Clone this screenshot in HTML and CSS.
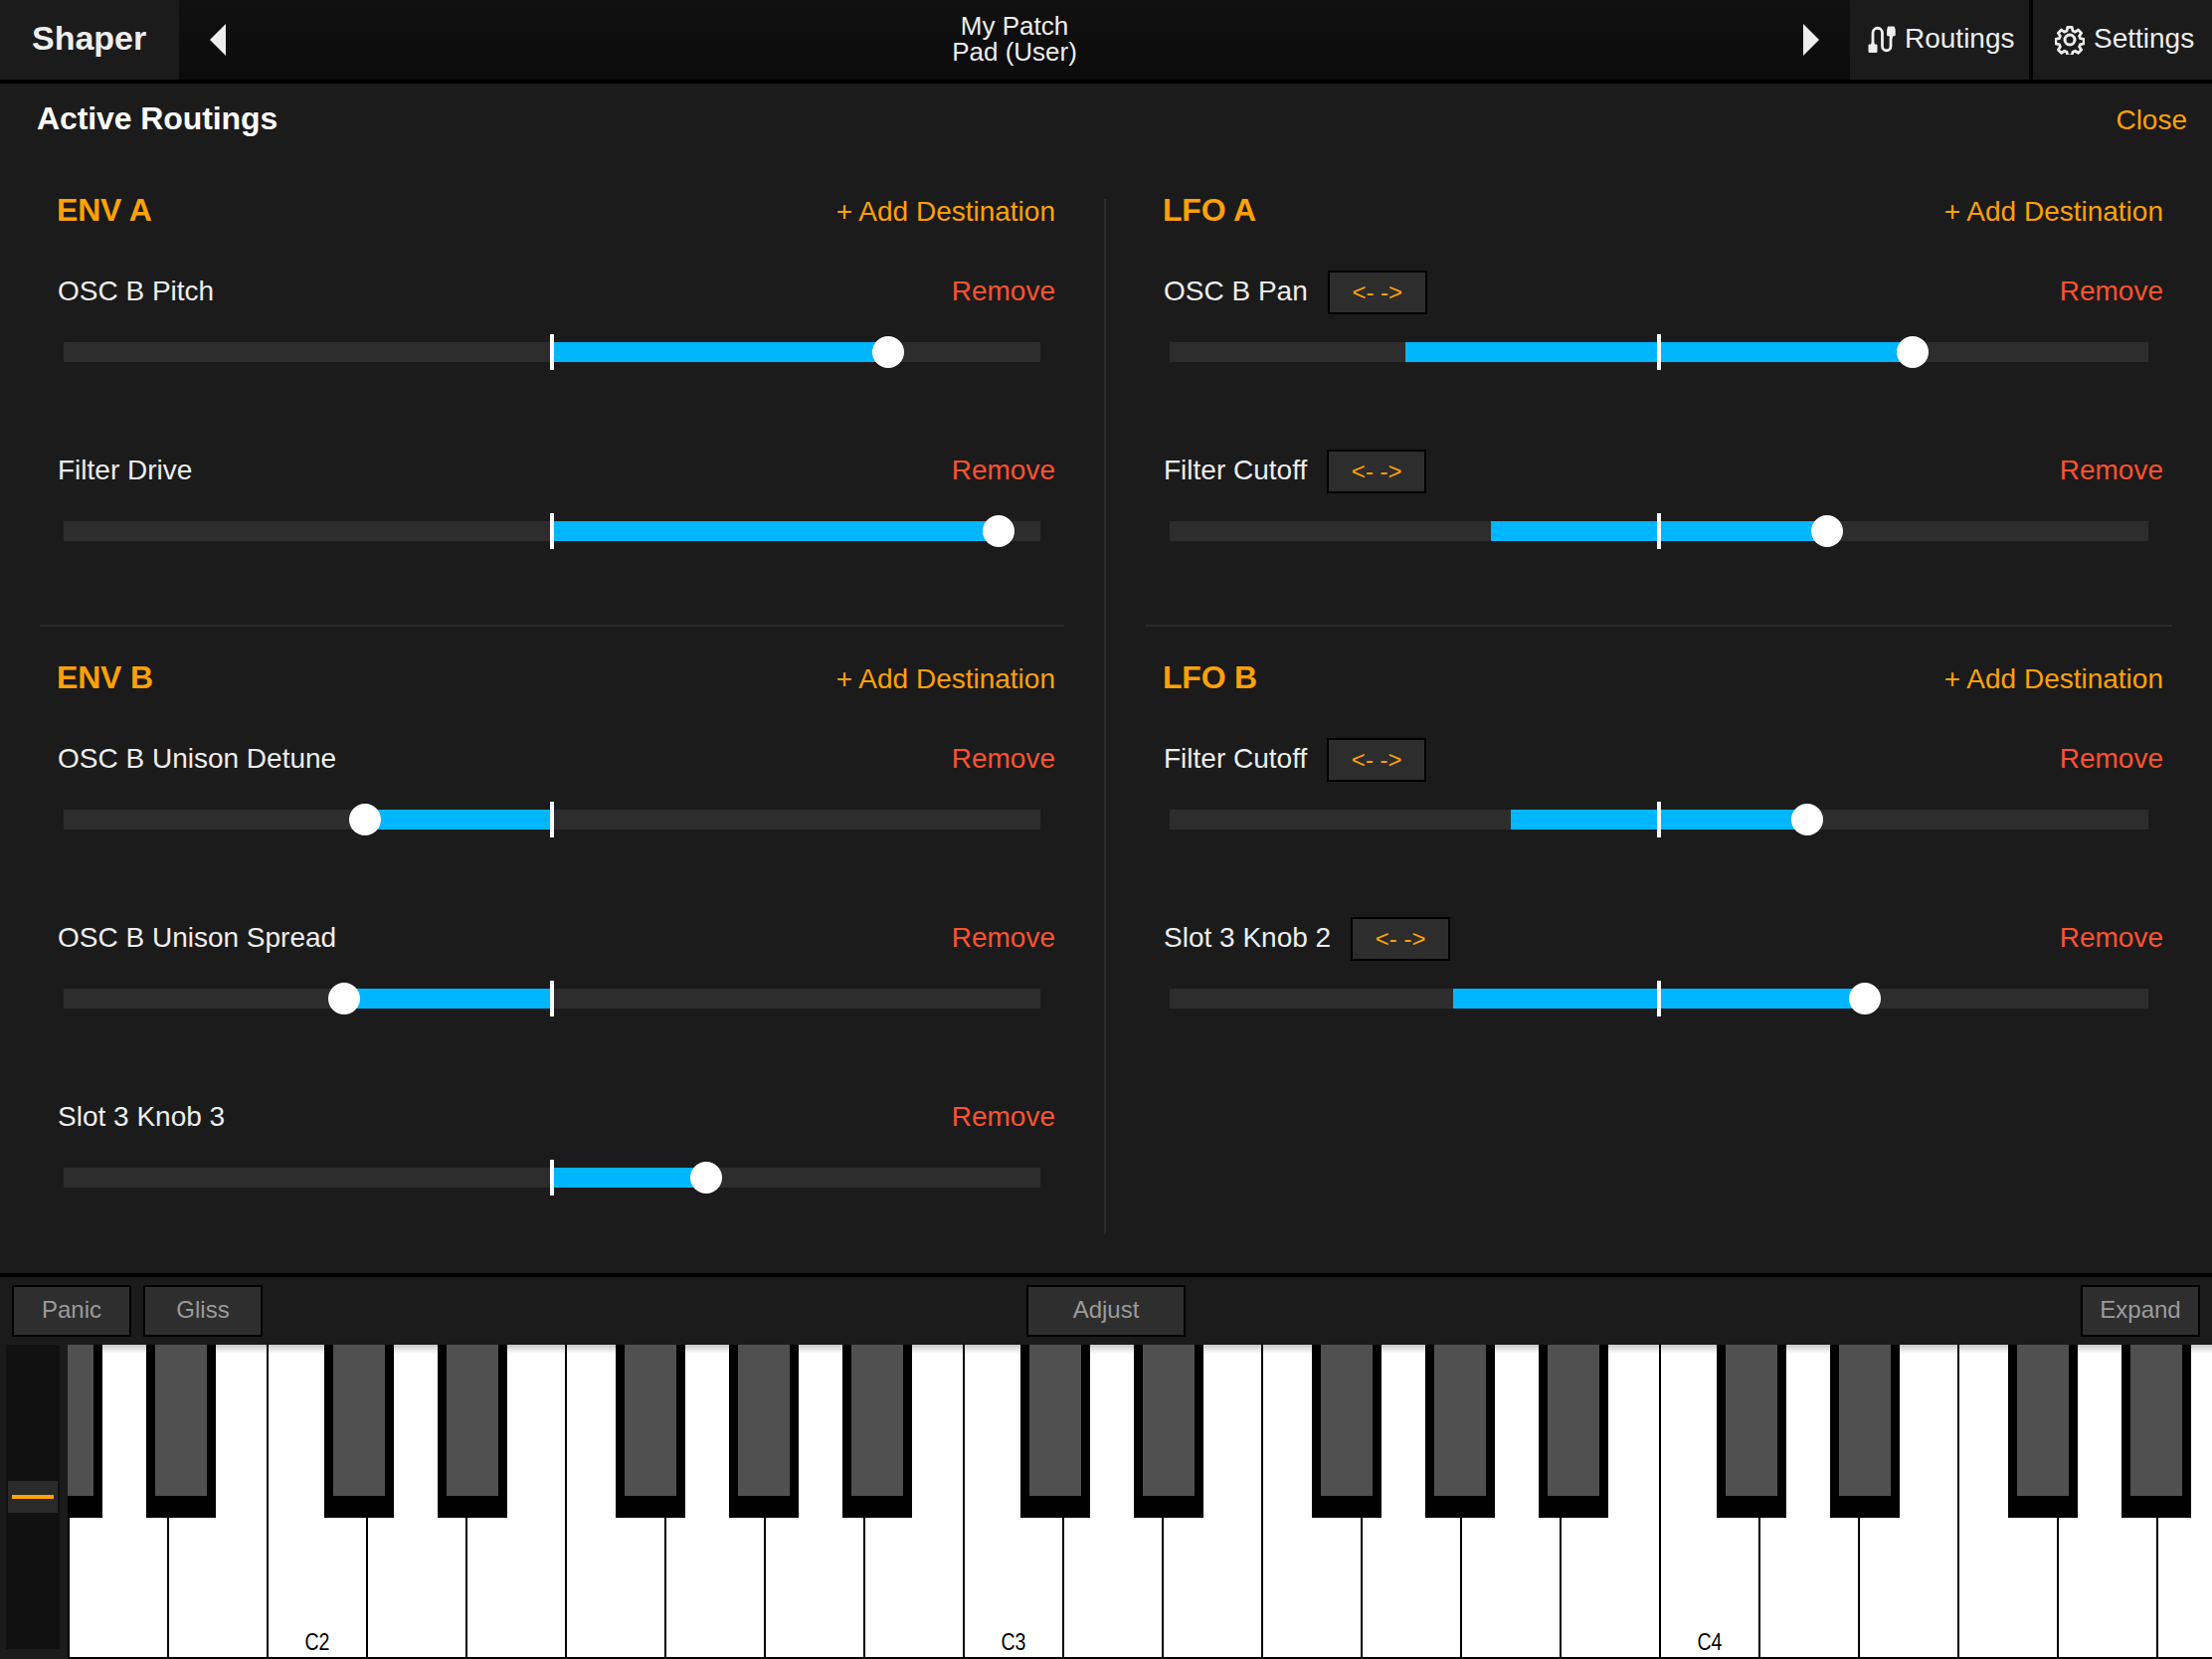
FILE: index.html
```html
<!DOCTYPE html>
<html lang="en">
<head>
    <meta charset="UTF-8">
    <meta name="viewport" content="width=device-width, initial-scale=1.0">
    <title>Shaper - Active Routings</title>
    <link rel="stylesheet" href="styles.css">
</head>
<body>
    <div class="top-bar">
        <div class="plugin-name">Shaper</div>
        <div class="patch-nav">
            <span class="arrow arrow-left"></span>
            <div class="patch-name">My Patch<br>Pad (User)</div>
            <span class="arrow arrow-right"></span>
        </div>
        <div class="top-button routings-button">
            <svg class="top-icon" width="28" height="28" viewBox="0 0 28 28">
                <path d="M1.2 18.5h1.8l1-2.5h2l1 2.5h1.8l.7.8v7l-.8.7H1.3l-.8-.7v-7z" fill="#eee"/>
                <path d="M20.5.5h5.5l1 .8.7 3v5.2l-.7.8h-1.6l-1 2.7h-2l-1-2.7h-1.6l-.7-.8V4.300l.7-3z" fill="#eee"/>
                <path d="M5 17V7a4.750 4.750 0 0 1 9.500 0v13.500a4.250 4.250 0 0 0 8.500 0V12" fill="none" stroke="#eee" stroke-width="2.800"/>
            </svg>
            Routings
        </div>
        <div class="top-button settings-button">
            <svg class="top-icon" width="30" height="30" viewBox="0 0 30 30">
                <path d="M12.600 1.500h4.800l.8 3.900 2.600 1.100 3.300-2.200 3.400 3.400-2.200 3.300 1.100 2.600 3.900.8v4.800l-3.900.8-1.100 2.600 2.200 3.300-3.400 3.400-3.300-2.200-2.600 1.100-.8 3.900h-4.800l-.8-3.900-2.600-1.100-3.300 2.200-3.400-3.400 2.200-3.300-1.100-2.600-3.900-.8v-4.800l3.900-.8 1.100-2.600-2.200-3.300 3.400-3.400 3.300 2.200 2.600-1.100z" fill="none" stroke="#eee" stroke-width="3" stroke-linejoin="round" transform="translate(1.050 1.050) scale(.93)"/>
                <circle cx="15" cy="15" r="5" fill="none" stroke="#eee" stroke-width="3"/>
            </svg>
            Settings
        </div>
    </div>

    <div class="panel">
        <div class="panel-head">
            <span class="panel-title">Active Routings</span>
            <span class="close-link">Close</span>
        </div>
        <div class="columns">
            <div class="column">
                <div class="section">
                    <div class="section-head"><span class="source">ENV A</span><span class="add-link">+ Add Destination</span></div>
                    <div class="routing">
                        <div class="routing-head"><span class="dest">OSC B Pitch</span><span class="remove">Remove</span></div>
                        <div class="track"><div class="fill thumb-right" style="left:491px;width:338px"></div><span class="mark"></span></div>
                    </div>
                    <div class="routing">
                        <div class="routing-head"><span class="dest">Filter Drive</span><span class="remove">Remove</span></div>
                        <div class="track"><div class="fill thumb-right" style="left:491px;width:449px"></div><span class="mark"></span></div>
                    </div>
                </div>
                <div class="section-line"></div>
                <div class="section">
                    <div class="section-head"><span class="source">ENV B</span><span class="add-link">+ Add Destination</span></div>
                    <div class="routing">
                        <div class="routing-head"><span class="dest">OSC B Unison Detune</span><span class="remove">Remove</span></div>
                        <div class="track"><div class="fill thumb-left" style="left:303px;width:188px"></div><span class="mark"></span></div>
                    </div>
                    <div class="routing">
                        <div class="routing-head"><span class="dest">OSC B Unison Spread</span><span class="remove">Remove</span></div>
                        <div class="track"><div class="fill thumb-left" style="left:282px;width:209px"></div><span class="mark"></span></div>
                    </div>
                    <div class="routing">
                        <div class="routing-head"><span class="dest">Slot 3 Knob 3</span><span class="remove">Remove</span></div>
                        <div class="track"><div class="fill thumb-right" style="left:491px;width:155px"></div><span class="mark"></span></div>
                    </div>
                </div>
            </div>
            <div class="column-line"></div>
            <div class="column">
                <div class="section">
                    <div class="section-head"><span class="source">LFO A</span><span class="add-link">+ Add Destination</span></div>
                    <div class="routing">
                        <div class="routing-head"><span class="dest">OSC B Pan</span><button class="bipolar">&lt;- -&gt;</button><span class="remove">Remove</span></div>
                        <div class="track"><div class="fill thumb-right" style="left:237px;width:510px"></div><span class="mark"></span></div>
                    </div>
                    <div class="routing">
                        <div class="routing-head"><span class="dest">Filter Cutoff</span><button class="bipolar">&lt;- -&gt;</button><span class="remove">Remove</span></div>
                        <div class="track"><div class="fill thumb-right" style="left:323px;width:338px"></div><span class="mark"></span></div>
                    </div>
                </div>
                <div class="section-line"></div>
                <div class="section">
                    <div class="section-head"><span class="source">LFO B</span><span class="add-link">+ Add Destination</span></div>
                    <div class="routing">
                        <div class="routing-head"><span class="dest">Filter Cutoff</span><button class="bipolar">&lt;- -&gt;</button><span class="remove">Remove</span></div>
                        <div class="track"><div class="fill thumb-right" style="left:343px;width:298px"></div><span class="mark"></span></div>
                    </div>
                    <div class="routing">
                        <div class="routing-head"><span class="dest">Slot 3 Knob 2</span><button class="bipolar">&lt;- -&gt;</button><span class="remove">Remove</span></div>
                        <div class="track"><div class="fill thumb-right" style="left:285px;width:414px"></div><span class="mark"></span></div>
                    </div>
                </div>
            </div>
        </div>
    </div>

    <div class="toolbar">
        <div class="tool-group">
            <button class="tool-button">Panic</button>
            <button class="tool-button">Gliss</button>
        </div>
        <button class="tool-button tool-wide">Adjust</button>
        <div class="tool-group tool-right">
            <button class="tool-button">Expand</button>
        </div>
    </div>

    <div class="keyboard">
        <div class="wheel"><div class="wheel-thumb"></div></div>
        <div class="keys">
            <div class="key key-first"><span class="black gs"></span></div>
            <div class="key"><span class="black as"></span></div>
            <div class="key"></div>
            <div class="key"><span class="label">C2</span><span class="black cs"></span></div>
            <div class="key"><span class="black ds"></span></div>
            <div class="key"></div>
            <div class="key"><span class="black fs"></span></div>
            <div class="key"><span class="black gs"></span></div>
            <div class="key"><span class="black as"></span></div>
            <div class="key"></div>
            <div class="key"><span class="label">C3</span><span class="black cs"></span></div>
            <div class="key"><span class="black ds"></span></div>
            <div class="key"></div>
            <div class="key"><span class="black fs"></span></div>
            <div class="key"><span class="black gs"></span></div>
            <div class="key"><span class="black as"></span></div>
            <div class="key"></div>
            <div class="key"><span class="label">C4</span><span class="black cs"></span></div>
            <div class="key"><span class="black ds"></span></div>
            <div class="key"></div>
            <div class="key"><span class="black fs"></span></div>
            <div class="key"><span class="black gs"></span></div>
            <div class="key"><span class="black as"></span></div>
            <div class="key"></div>
        </div>
    </div>
</body>
</html>
```

FILE: styles.css
```css
* {
    box-sizing: border-box;
}
html, body {
    margin: 0;
    height: 100%;
}
body {
    width: 2224px;
    height: 1668px;
    overflow: hidden;
    display: flex;
    flex-direction: column;
    background-color: #1b1b1b;
    font-family: "Liberation Sans", Arial, sans-serif;
    font-size: 28px;
    color: #eee;
}

/* top bar */
.top-bar {
    display: flex;
    height: 84px;
    flex-shrink: 0;
    background-color: #000;
    padding-bottom: 4px;
}
.plugin-name {
    width: 180px;
    padding-left: 32px;
    background-color: #1b1b1b;
    font-size: 34px;
    font-weight: bold;
    line-height: 76px;
}
.patch-nav {
    flex: 1;
    display: flex;
    justify-content: space-between;
    align-items: center;
    padding: 0 31px;
    background: linear-gradient(#111, #0b0b0b);
}
.patch-name {
    margin-bottom: 3px;
    font-size: 26px;
    line-height: 26px;
    text-align: center;
}
.arrow {
    width: 0;
    height: 0;
    border-top: 16px solid transparent;
    border-bottom: 16px solid transparent;
}
.arrow-left {
    border-right: 16px solid #eee;
}
.arrow-right {
    border-left: 16px solid #eee;
}
.top-button {
    width: 180px;
    display: flex;
    align-items: center;
    gap: 9px;
    padding-bottom: 2px;
    background-color: #1b1b1b;
}
.top-icon {
    margin-top: 1px;
}
.routings-button {
    padding-left: 18px;
}
.settings-button {
    margin-left: 4px;
    padding-left: 22px;
}

/* routings panel */
.panel {
    height: 1200px;
    flex-shrink: 0;
    display: flex;
    flex-direction: column;
    border-bottom: 4px solid #000;
}
.panel-head {
    height: 70px;
    flex-shrink: 0;
    display: flex;
    justify-content: space-between;
    align-items: center;
    padding: 0 25px 0 37px;
}
.panel-title {
    font-size: 32px;
    font-weight: bold;
    letter-spacing: -0.1px;
    color: #fff;
}
.close-link {
    margin-top: 4px;
    color: #ffa108;
}
.columns {
    flex: 1;
    display: flex;
    padding-top: 36px;
}
.column {
    width: 1110px;
    padding: 0 49px 0 58px;
}
.column:last-child {
    width: 1112px;
}
.column-line {
    width: 2px;
    margin: 10px 0 39px;
    background-color: #2b2b2b;
}
.section-head {
    height: 40px;
    margin-bottom: 32px;
    padding-top: 2px;
    display: flex;
    justify-content: space-between;
    align-items: center;
}
.source {
    margin-left: -1px;
    font-size: 32px;
    font-weight: bold;
    letter-spacing: -0.2px;
    color: #ffa108;
}
.add-link {
    margin-top: 4px;
    color: #ffa108;
}
.section-line {
    height: 2px;
    margin: 6px -9px 30px -18px;
    background-color: #2b2b2b;
}
.routing {
    height: 180px;
}
.routing-head {
    height: 60px;
    padding-top: 4px;
    display: flex;
    align-items: center;
}
.dest, .remove {
    margin-bottom: 2px;
}
.remove {
    margin-left: auto;
    color: #ff5230;
}
.bipolar {
    width: 100px;
    height: 44px;
    margin-left: 20px;
    padding: 0;
    background-color: #2d2d2d;
    border: 2px solid #000;
    font-family: inherit;
    font-size: 24px;
    color: #ffa108;
}

/* slider */
.track {
    position: relative;
    height: 20px;
    margin: 22px 15px 0 6px;
    background-color: #2d2d2d;
}
.fill {
    position: absolute;
    top: 0;
    bottom: 0;
    background-color: #00b6ff;
}
.fill::after {
    content: "";
    position: absolute;
    top: -6px;
    width: 32px;
    height: 32px;
    border-radius: 50%;
    background-color: #fff;
}
.thumb-right::after {
    right: -16px;
}
.thumb-left::after {
    left: -16px;
}
.mark {
    position: absolute;
    left: 50%;
    top: -8px;
    width: 4px;
    height: 36px;
    margin-left: -2px;
    background-color: #fff;
}

/* toolbar under the panel */
.toolbar {
    height: 68px;
    flex-shrink: 0;
    display: grid;
    grid-template-columns: 1fr 160px 1fr;
    align-items: center;
    padding: 0 12px;
}
.tool-group {
    display: flex;
    gap: 12px;
}
.tool-right {
    justify-content: flex-end;
}
.tool-button {
    width: 120px;
    height: 52px;
    padding: 0 0 2px;
    background-color: #2e2e2e;
    border: 2px solid #000;
    font-family: inherit;
    font-size: 24px;
    color: #9b9b9b;
}
.tool-wide {
    width: 160px;
}

/* keyboard */
.keyboard {
    flex: 1;
    display: flex;
    min-height: 0;
}
.wheel {
    position: relative;
    width: 54px;
    height: 306px;
    margin: 0 8px 0 6px;
    flex-shrink: 0;
    background-color: #111;
}
.wheel-thumb {
    position: absolute;
    left: 2px;
    right: 2px;
    top: 137px;
    height: 32px;
    display: flex;
    align-items: center;
    justify-content: center;
    background-color: #2a2a2a;
}
.wheel-thumb::before {
    content: "";
    width: 42px;
    height: 4px;
    background-color: #ffa500;
}
.keys {
    flex: 1;
    display: flex;
    overflow: hidden;
}
.key {
    position: relative;
    width: 100px;
    flex-shrink: 0;
    background: linear-gradient(#c8c8c8, #fff 9px);
    border-left: 2px solid #000;
    border-bottom: 2px solid #000;
}
.key-first {
    margin-left: -100px;
}
.label {
    position: absolute;
    left: 0;
    right: 0;
    bottom: 0;
    text-align: center;
    font-size: 23px;
    line-height: 30px;
    color: #000;
    transform: scaleX(0.85);
}
.black {
    position: absolute;
    top: 0;
    z-index: 1;
    width: 70px;
    height: 174px;
    background-color: #505050;
    border-left: 9px solid #000;
    border-right: 9px solid #000;
    border-bottom: 22px solid #000;
}
.cs { left: 56px; }
.ds { left: 70px; }
.fs { left: 49px; }
.gs { left: 63px; }
.as { left: 77px; }
```
